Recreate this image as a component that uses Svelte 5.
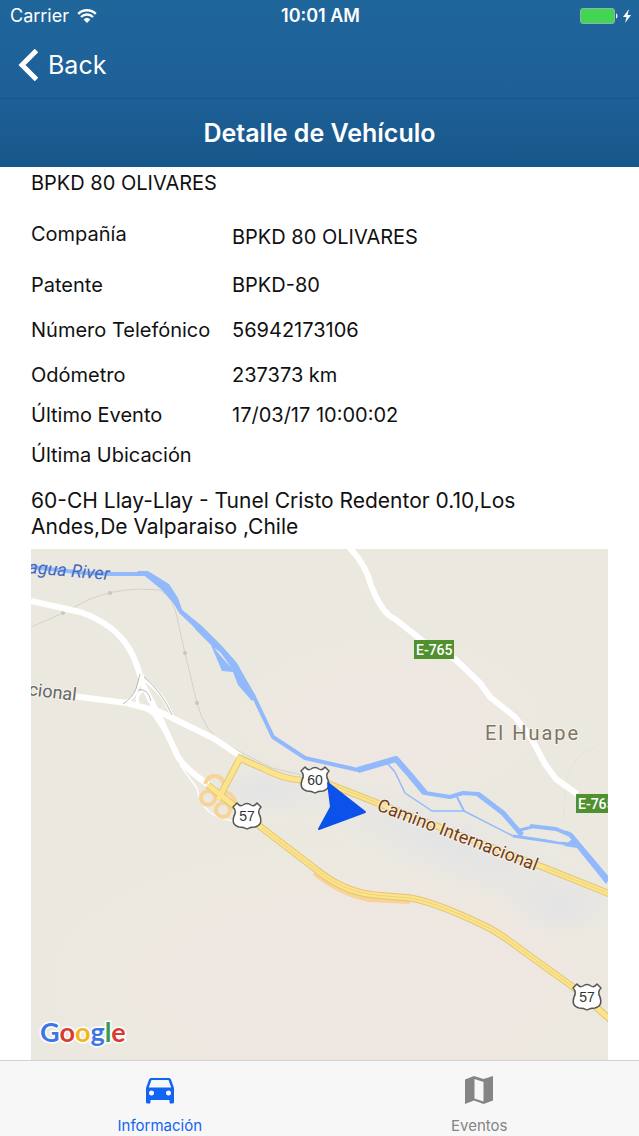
<script>
  let activeTab = "info";

  const vehicle = "BPKD 80 OLIVARES";

  const details = [
    { label: "Compañía", value: "BPKD 80 OLIVARES", size: "first" },
    { label: "Patente", value: "BPKD-80", size: "wide" },
    { label: "Número Telefónico", value: "56942173106", size: "wide" },
    { label: "Odómetro", value: "237373 km", size: "wide" },
    { label: "Último Evento", value: "17/03/17 10:00:02", size: "" },
    { label: "Última Ubicación", value: "", size: "" },
  ];

  const address =
    "60-CH Llay-Llay - Tunel Cristo Redentor 0.10,Los Andes,De Valparaiso ,Chile";

  // Route shields on the map
  const shields = [
    { x: 315, y: 780, route: "60" },
    { x: 247, y: 816, route: "57" },
    { x: 587, y: 997, route: "57" },
  ];

  const selectTab = (tab) => {
    activeTab = tab;
  };
</script>

<div class="app">
  <header>
    <div class="status">
      <div class="carrier">
        <span>Carrier</span>
        <svg width="20" height="14" viewBox="0 0 20 14" aria-hidden="true">
          <path d="M1.200 4.800a12.600 12.600 0 0 1 17.600 0M4 8a8.600 8.600 0 0 1 12 0" fill="none" stroke="#fff" stroke-width="2.400" />
          <path d="M6.600 10.400a5 5 0 0 1 6.800 0L10 14z" fill="#fff" />
        </svg>
      </div>
      <div class="time">10:01 AM</div>
      <div class="battery">
        <svg width="52" height="18" viewBox="0 0 52 18" aria-hidden="true">
          <rect x="1.500" y="1.500" width="34" height="15" rx="2.500" fill="#43d551" stroke="#8fb3b0" />
          <path d="M37 6.500c2 .6 2 4.400 0 5z" fill="#fff" />
          <path d="M50 2l-6 8h3.500L46 16l6-8h-3.500z" fill="#fff" />
        </svg>
      </div>
    </div>

    <div class="back-row">
      <button class="back">
        <svg width="20" height="32" viewBox="0 0 20 32" aria-hidden="true">
          <path d="M18.500 1.500L4 16l14.500 14.500" fill="none" stroke="#fff" stroke-width="5" />
        </svg>
        <span>Back</span>
      </button>
    </div>

    <h1>Detalle de Vehículo</h1>
  </header>

  <main>
    <div class="name">{vehicle}</div>

    <dl>
      {#each details as detail}
        <div class="row {detail.size}">
          <dt>{detail.label}</dt>
          <dd>{detail.value}</dd>
        </div>
      {/each}
    </dl>

    <p class="address">{address}</p>

    <div class="map">
      <svg viewBox="31 549 577 511" preserveAspectRatio="xMidYMid slice" role="img" aria-label="Mapa">
        <defs>
          <radialGradient id="warm">
            <stop offset="0" stop-color="#efe7e2" />
            <stop offset=".6" stop-color="#efe7e2" stop-opacity=".8" />
            <stop offset="1" stop-color="#efe7e2" stop-opacity="0" />
          </radialGradient>
          <radialGradient id="town">
            <stop offset="0" stop-color="#e4e4e6" />
            <stop offset="1" stop-color="#e4e4e6" stop-opacity="0" />
          </radialGradient>
        </defs>

        <rect x="31" y="549" width="577" height="511" fill="#ebe9df" />
        <ellipse cx="350" cy="985" rx="300" ry="140" fill="url(#warm)" />
        <ellipse cx="390" cy="720" rx="150" ry="80" fill="url(#warm)" />
        <ellipse cx="450" cy="845" rx="190" ry="40" transform="rotate(21 450 845)" fill="url(#town)" />
        <ellipse cx="265" cy="790" rx="70" ry="30" fill="url(#town)" />
        <ellipse cx="560" cy="905" rx="60" ry="34" fill="url(#town)" />

        <!-- Railway -->
        <g fill="none" stroke="#d3d1c8">
          <path d="M31 627L63 613 88 600Q110 590 140 589L160 590Q174 597 178 622L185 653 197 703Q205 733 225 744L272 768 310 777" />
          <path d="M598 745L577 758 567 775 563 820" stroke="#e4e2d9" />
        </g>
        <g fill="#c8c6be">
          <circle cx="63" cy="613" r="2" />
          <circle cx="110" cy="593" r="2" />
          <circle cx="185" cy="653" r="2" />
          <circle cx="197" cy="703" r="2" />
        </g>

        <!-- River -->
        <g fill="none" stroke="#91b9fb" stroke-linejoin="round">
          <path d="M31 567L85 573 112 574 146 574 166 587 181 612 200 630 222 650 235 665 254 697 273 737 305 758 358 770 396 759 410 775 425 793 450 797 463 793 478 794 503 813 522 835" stroke-width="4" />
          <path d="M358 770L396 759 410 775 425 793" stroke-width="6" />
          <path d="M387 763L395 772 405 793 432 811 464 811 513 836" stroke-width="1.500" />
          <path d="M457 797L464 811" stroke-width="2" />
          <path d="M478 794L503 813 522 835" stroke-width="5" />
          <path d="M513 836L575 845M520 830L532 827" stroke-width="3" />
          <path d="M530 826L556 829 570 835 608 880" stroke-width="4" />
        </g>
        <g fill="#91b9fb">
          <path d="M137 571L148 571 169 584 178 598 184 615 176 606 162 590 146 577z" />
          <path d="M181 609L202 626 222 646 237 663 256 697 252 701 238 685 233 672 222 671 211 645 196 630z" />
          <path d="M565 830L572 833 610 878 606 884 577 848 564 846 572 839z" />
        </g>
        <path d="M214 648L220 652 231 667 226 662z" fill="#ece9e2" />
        <path d="M532 831L553 833 567 840 560 842 526 835z" fill="#ece9e2" />

        <!-- Local roads -->
        <g fill="none" stroke="#fff" stroke-linejoin="round">
          <path d="M31 601L80 612Q115 624 130 650 136 660 143 685L160 718 178 757Q186 770 216 790" stroke-width="6" />
          <path d="M72 696L127 703 160 712 213 738 240 756" stroke-width="6" />
          <path d="M349 547Q366 565 371 585 382 614 395 619L434 650 455 659 480 683 490 697 515 717 530 736 545 764 556 779 577 794" stroke-width="6" />
          <path d="M143 675L137 690Q133 700 124 702M143 690Q133 697 140 707M143 678Q160 692 166 703L173 717M135 703L153 714 168 737" stroke-width="3" />
          <path d="M180 765L197 788Q202 818 234 821" stroke-width="1.500" />
        </g>
        <path d="M144 677Q162 692 172 715M140 674L136 689Q132 698 123 704M138 690Q148 688 151 701" fill="none" stroke="#bdbab0" />

        <!-- Interchange -->
        <g fill="none" stroke="#f8d397" stroke-width="4">
          <circle cx="208" cy="798" r="7" />
          <circle cx="223" cy="810" r="7" />
          <path d="M205 784Q208 775 216 776 225 778 224 788M222 792Q232 791 236 803" />
          <path d="M316 871Q342 892 370 897L410 899" stroke-width="10" />
        </g>

        <!-- Highways: darker casing with the road on top -->
        <g fill="none" stroke="#e3c675" stroke-width="7" stroke-linejoin="round">
          <path d="M237 757L262 768Q283 779 300 780L326 783 380 804 545 868 610 894" />
          <path d="M240 758L218 800" />
          <path d="M208 785L262 828 313 867Q342 892 375 895L410 898Q435 902 483 925 500 933 523 951L573 987 612 1021" />
        </g>
        <g fill="none" stroke="#fbe48c" stroke-width="5" stroke-linejoin="round">
          <path d="M237 757L262 768Q283 779 300 780L326 783 380 804 545 868 610 894" />
          <path d="M240 758L218 800" />
          <path d="M208 785L262 828 313 867Q342 892 375 895L410 898Q435 902 483 925 500 933 523 951L573 987 612 1021" />
        </g>
        <path d="M262 828L313 867Q342 892 375 895L410 898Q435 902 483 925 500 933 523 951L573 987M335 786L380 804M545 868L610 894" fill="none" stroke="#f1d27b" />

        <!-- Labels -->
        <g class="map-text">
          <text class="river" transform="translate(28 573) rotate(5)">agua River</text>
          <text class="street" transform="translate(28 695) rotate(7)">cional</text>
          <text class="camino" transform="translate(376 810) rotate(21)">Camino Internacional</text>
          <text class="place" x="485" y="740">El Huape</text>
        </g>

        <rect x="414" y="640" width="40" height="19" fill="#50902f" />
        <text class="badge" x="416" y="655">E-765</text>
        <rect x="576" y="794" width="40" height="19" fill="#50902f" />
        <text class="badge" x="578" y="809">E-765</text>

        {#each shields as shield}
          <g transform="translate({shield.x} {shield.y})">
            <path d="M-10-13Q-7-9-4-11 0-14 4-11 7-9 10-13L14-9Q10-5 13 0 16 9 8 11 3 11 0 13-3 11-8 11-16 9-13 0-10-5-14-9z" fill="#fff" stroke="#555" stroke-width="1.500" stroke-linejoin="round" />
            <text class="route" y="5">{shield.route}</text>
          </g>
        {/each}

        <!-- Vehicle marker -->
        <path d="M328 783L365 812 319 829 331 807z" fill="#0b51ea" stroke="#0b51ea" stroke-width="2" stroke-linejoin="round" />

        <text class="google" x="40" y="1042"><tspan fill="#3f76e5">G</tspan><tspan fill="#d93a32">o</tspan><tspan fill="#f2b51d">o</tspan><tspan fill="#3f76e5">g</tspan><tspan fill="#3a9c50">l</tspan><tspan fill="#d93a32">e</tspan></text>
      </svg>
    </div>
  </main>

  <nav>
    <button class:active={activeTab === "info"} on:click={() => selectTab("info")}>
      <svg width="28" height="26" viewBox="0 0 28 26" aria-hidden="true">
        <path fill-rule="evenodd" d="M5 0h18q1.500 0 2 1.500L28 10v14q0 1.500-1.500 1.500h-2Q23.500 25.500 23.500 24v-2h-19v2q0 1.500-1 1.500h-2Q0 25.500 0 24V10l3-8.500Q3.500 0 5 0zM5.500 2L2.800 9.500h22.400L22.500 2zM5.500 12.500a2.500 2.500 0 1 0 0 5 2.500 2.500 0 1 0 0-5zM22.500 12.500a2.500 2.500 0 1 0 0 5 2.500 2.500 0 1 0 0-5z" fill="currentColor" />
      </svg>
      <span>Información</span>
    </button>
    <button class:active={activeTab === "events"} on:click={() => selectTab("events")}>
      <svg width="28" height="28" viewBox="0 0 28 28" aria-hidden="true">
        <path fill-rule="evenodd" d="M0 3.500L9 0l9.500 3L28 0v24.500L18.500 28 9 24.500 0 28zM9.500 3v19.500l9 3V6z" fill="currentColor" />
      </svg>
      <span>Eventos</span>
    </button>
  </nav>
</div>

<style>
  :global(body) {
    margin: 0;
    background-color: white;
  }

  .app {
    display: flex;
    flex-direction: column;
    min-height: 100vh;
    font-family: Inter, "Liberation Sans", sans-serif;
    font-size: 20px;
    line-height: 24px;
    color: #111;
  }

  button {
    display: flex;
    align-items: center;
    padding: 0;
    border: none;
    background: none;
    font: inherit;
    color: inherit;
    cursor: pointer;
  }

  header {
    background: linear-gradient(#1f669b, #1d6098 55%, #18578a);
    color: white;
  }

  .status {
    display: grid;
    grid-template-columns: 1fr auto 1fr;
    align-items: center;
    height: 32px;
    padding: 0 8px 0 10px;
    font-size: 18px;
  }

  .carrier {
    display: flex;
    align-items: center;
    gap: 8px;
  }

  .time {
    font-weight: 600;
  }

  .battery {
    display: flex;
    justify-content: flex-end;
  }

  .back-row {
    height: 66px;
    display: flex;
    align-items: center;
    padding: 0 18px;
    border-bottom: 1px solid #18568a;
  }

  .back {
    gap: 10px;
    font-size: 25px;
  }

  h1 {
    margin: 0;
    font-size: 25px;
    font-weight: 600;
    line-height: 68px;
    text-align: center;
  }

  main {
    display: flex;
    flex: 1;
    flex-direction: column;
    padding: 4px 31px 0;
  }

  dl {
    margin: 0;
  }

  .row {
    display: grid;
    grid-template-columns: 201px 1fr;
    margin-top: 16px;
  }

  .row.wide {
    margin-top: 21px;
  }

  .row.first {
    height: 30px;
    margin-top: 27px;
  }

  .row.first dd {
    align-self: center;
  }

  dd {
    margin: 0;
  }

  .address {
    margin: 21px 0 9px;
    font-size: 21px;
    line-height: 26px;
  }

  .map {
    display: flex;
    flex: 1;
    min-height: 320px;
    overflow: hidden;
  }

  .map svg {
    flex: 1;
    width: 100%;
    min-width: 0;
  }

  .map-text {
    font-family: Roboto, sans-serif;
    font-size: 18px;
    paint-order: stroke;
    stroke: #f4f2ec;
    stroke-width: 2px;
  }

  .river {
    fill: #4569bd;
    font-style: italic;
    stroke: none;
  }

  .street {
    fill: #666;
  }

  .camino {
    fill: #763c16;
  }

  .place {
    fill: #7c7561;
    font-size: 20px;
    letter-spacing: 2px;
  }

  .badge {
    fill: white;
    font-family: Roboto, sans-serif;
    font-size: 14px;
    font-weight: 500;
  }

  .route {
    fill: #333;
    font-family: "Liberation Sans", sans-serif;
    font-size: 14px;
    text-anchor: middle;
  }

  .google {
    font-family: Lato, sans-serif;
    font-size: 27px;
    font-weight: 700;
    paint-order: stroke;
    stroke: white;
    stroke-width: 3px;
  }

  nav {
    display: grid;
    grid-template-columns: 1fr 1fr;
    height: 75px;
    border-top: 1px solid #d4d2cf;
    background-color: #f7f7f8;
    color: #858585;
    font-size: 15px;
    line-height: 20px;
  }

  nav button {
    flex-direction: column;
    justify-content: flex-end;
    gap: 12px;
  }

  nav .active {
    color: #1264f5;
  }
</style>
